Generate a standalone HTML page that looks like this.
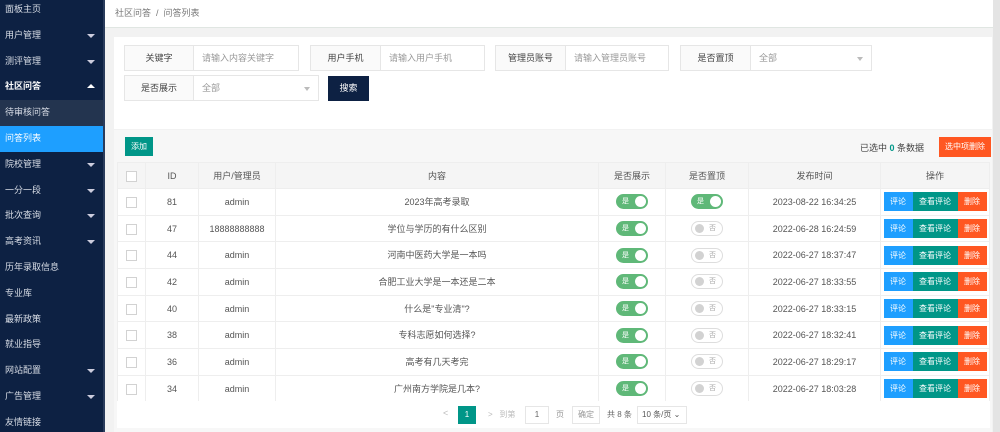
<!DOCTYPE html>
<html><head><meta charset="utf-8"><style>
*{box-sizing:border-box;margin:0;padding:0}
body{width:1000px;height:432px;overflow:hidden;background:#f2f2f2;font-family:"Liberation Sans","Noto Sans CJK SC",sans-serif;font-size:9px;color:#555;position:relative}
.side{position:absolute;left:0;top:0;width:105px;height:432px;background:#0d2143;border-right:2px solid #2a3c5c;overflow:hidden}
.side .in{position:absolute;top:-3px;left:0;right:0}
.side .in div{height:25.8px;line-height:25.8px;padding-left:5px;color:#d8dde6;font-size:9px;position:relative}
.side .in div.b{font-weight:bold;color:#fff}
.side .in div.dd::after{content:"";position:absolute;right:8px;top:11px;border:4px solid transparent;border-top:4px solid #ccd;border-bottom:0}
.side .in div.up::after{content:"";position:absolute;right:8px;top:10px;border:4px solid transparent;border-bottom:4px solid #fff;border-top:0}
.side .in .sub{background:#23344f}
.side .in .act{background:#1e9fff;color:#fff}
.top{position:absolute;left:105px;top:0;right:0;height:28px;background:#fff;border-bottom:1px solid #e0e6e2;padding-left:10px;line-height:26px;color:#777}
.card{position:absolute;background:#fff;left:114px;width:878px}
.lab{position:absolute;height:26px;border:1px solid #e6e6e6;background:#fafafa;text-align:center;line-height:24px;color:#444}
.inp{position:absolute;height:26px;border:1px solid #e6e6e6;background:#fff;line-height:24px;padding-left:8px;color:#999}
.sel::after{content:"";position:absolute;right:8px;top:11px;border:3px solid transparent;border-top:4px solid #bbb;border-bottom:0}
.btn{position:absolute;color:#fff;text-align:center}
table{position:absolute;left:117px;top:162px;width:873px;border-collapse:collapse;background:#fff}
td,th{border:1px solid #eee;height:26.7px;padding:0;line-height:12px;text-align:center;font-weight:normal;color:#555;font-size:9px}
th{background:#f5f5f5;height:26px}
.cb{display:inline-block;width:11px;height:11px;border:1px solid #d2d2d2;background:#fff;vertical-align:middle}
.sw{display:inline-block;width:32px;height:15px;border-radius:8px;background:#5fb878;position:relative;vertical-align:middle;color:#fff;font-size:7px;line-height:15px;text-align:left;padding-left:6px}
.sw::after{content:"";position:absolute;right:2px;top:2px;width:11px;height:11px;border-radius:50%;background:#fff}
.sw.off{background:#fff;border:1px solid #ddd;color:#aaa;padding-left:17px;line-height:13px}
.sw.off::after{left:3px;top:2px;right:auto;background:#d2d2d2;width:9px;height:9px}
.ops span{display:inline-block;height:19px;line-height:19px;color:#fff;font-size:8px;vertical-align:middle}
</style></head><body>
<div class="side"><div class="in">
<div>面板主页</div><div class="dd">用户管理</div><div class="dd">测评管理</div><div class="b up">社区问答</div><div class="sub">待审核问答</div><div class="act">问答列表</div><div class="dd">院校管理</div><div class="dd">一分一段</div><div class="dd">批次查询</div><div class="dd">高考资讯</div><div>历年录取信息</div><div>专业库</div><div>最新政策</div><div>就业指导</div><div class="dd">网站配置</div><div class="dd">广告管理</div><div>友情链接</div>
</div></div>
<div class="top">社区问答 &nbsp;/&nbsp; 问答列表</div>
<div class="card" style="top:37px;height:92px"></div>
<div class="lab" style="left:124px;top:45px;width:70px">关键字</div><div class="inp" style="left:193px;top:45px;width:106px">请输入内容关键字</div>
<div class="lab" style="left:310px;top:45px;width:71px">用户手机</div><div class="inp" style="left:380px;top:45px;width:105px">请输入用户手机</div>
<div class="lab" style="left:495px;top:45px;width:71px">管理员账号</div><div class="inp" style="left:565px;top:45px;width:104px">请输入管理员账号</div>
<div class="lab" style="left:680px;top:45px;width:71px">是否置顶</div><div class="inp sel" style="left:750px;top:45px;width:122px">全部</div>
<div class="lab" style="left:124px;top:75px;width:70px">是否展示</div><div class="inp sel" style="left:193px;top:75px;width:126px">全部</div>
<div class="btn" style="left:328px;top:76px;width:41px;height:25px;line-height:25px;background:#0d2143">搜索</div>
<div class="card" style="top:130px;height:302px;background:#f7f7f7"></div>
<div class="btn" style="left:125px;top:137px;width:28px;height:19px;line-height:19px;background:#009688;font-size:8px">添加</div>
<div style="position:absolute;left:860px;top:141px;color:#444">已选中 <b style="color:#009688">0</b> 条数据</div>
<div class="btn" style="left:939px;top:137px;width:52px;height:20px;line-height:20px;background:#ff5722;font-size:8px">选中项删除</div>
<table>
<tr><th style="width:28px"><span class="cb"></span></th><th style="width:53px">ID</th><th style="width:77px">用户/管理员</th><th style="width:323px">内容</th><th style="width:67px">是否展示</th><th style="width:83px">是否置顶</th><th style="width:132px">发布时间</th><th>操作</th></tr>
<tr><td><span class="cb"></span></td><td>81</td><td>admin</td><td>2023年高考录取</td><td><span class="sw">是</span></td><td><span class="sw">是</span></td><td>2023-08-22 16:34:25</td><td class="ops"><span style="width:29px;background:#1e9fff">评论</span><span style="width:45px;background:#009688">查看评论</span><span style="width:29px;background:#ff5722">删除</span></td></tr>
<tr><td><span class="cb"></span></td><td>47</td><td>18888888888</td><td>学位与学历的有什么区别</td><td><span class="sw">是</span></td><td><span class="sw off">否</span></td><td>2022-06-28 16:24:59</td><td class="ops"><span style="width:29px;background:#1e9fff">评论</span><span style="width:45px;background:#009688">查看评论</span><span style="width:29px;background:#ff5722">删除</span></td></tr>
<tr><td><span class="cb"></span></td><td>44</td><td>admin</td><td>河南中医药大学是一本吗</td><td><span class="sw">是</span></td><td><span class="sw off">否</span></td><td>2022-06-27 18:37:47</td><td class="ops"><span style="width:29px;background:#1e9fff">评论</span><span style="width:45px;background:#009688">查看评论</span><span style="width:29px;background:#ff5722">删除</span></td></tr>
<tr><td><span class="cb"></span></td><td>42</td><td>admin</td><td>合肥工业大学是一本还是二本</td><td><span class="sw">是</span></td><td><span class="sw off">否</span></td><td>2022-06-27 18:33:55</td><td class="ops"><span style="width:29px;background:#1e9fff">评论</span><span style="width:45px;background:#009688">查看评论</span><span style="width:29px;background:#ff5722">删除</span></td></tr>
<tr><td><span class="cb"></span></td><td>40</td><td>admin</td><td>什么是"专业清"?</td><td><span class="sw">是</span></td><td><span class="sw off">否</span></td><td>2022-06-27 18:33:15</td><td class="ops"><span style="width:29px;background:#1e9fff">评论</span><span style="width:45px;background:#009688">查看评论</span><span style="width:29px;background:#ff5722">删除</span></td></tr>
<tr><td><span class="cb"></span></td><td>38</td><td>admin</td><td>专科志愿如何选择?</td><td><span class="sw">是</span></td><td><span class="sw off">否</span></td><td>2022-06-27 18:32:41</td><td class="ops"><span style="width:29px;background:#1e9fff">评论</span><span style="width:45px;background:#009688">查看评论</span><span style="width:29px;background:#ff5722">删除</span></td></tr>
<tr><td><span class="cb"></span></td><td>36</td><td>admin</td><td>高考有几天考完</td><td><span class="sw">是</span></td><td><span class="sw off">否</span></td><td>2022-06-27 18:29:17</td><td class="ops"><span style="width:29px;background:#1e9fff">评论</span><span style="width:45px;background:#009688">查看评论</span><span style="width:29px;background:#ff5722">删除</span></td></tr>
<tr><td><span class="cb"></span></td><td>34</td><td>admin</td><td>广州南方学院是几本?</td><td><span class="sw">是</span></td><td><span class="sw off">否</span></td><td>2022-06-27 18:03:28</td><td class="ops"><span style="width:29px;background:#1e9fff">评论</span><span style="width:45px;background:#009688">查看评论</span><span style="width:29px;background:#ff5722">删除</span></td></tr>
</table>
<div style="position:absolute;left:117px;top:401px;width:873px;height:27px;background:#fff"></div>
<div style="position:absolute;left:443px;top:408px;color:#bbb">&lt;</div>
<div class="btn" style="left:458px;top:406px;width:18px;height:18px;line-height:18px;background:#009688;font-size:8px">1</div>
<div style="position:absolute;left:488px;top:409px;color:#bbb;font-size:8px">&gt; &nbsp; 到第</div>
<div class="inp" style="left:525px;top:406px;width:24px;height:18px;line-height:16px;padding:0;text-align:center;color:#666;font-size:8px">1</div>
<div style="position:absolute;left:556px;top:409px;color:#999;font-size:8px">页</div>
<div class="inp" style="left:572px;top:406px;width:28px;height:18px;line-height:16px;padding:0;text-align:center;color:#999;font-size:8px">确定</div>
<div style="position:absolute;left:607px;top:409px;color:#666;font-size:8px">共 8 条</div>
<div class="inp" style="left:637px;top:406px;width:50px;height:18px;line-height:16px;padding-left:4px;color:#555;font-size:8px">10 条/页 ⌄</div>
<div style="position:absolute;left:993px;top:0;width:7px;height:432px;background:#e4e4e4"></div>
</body></html>
